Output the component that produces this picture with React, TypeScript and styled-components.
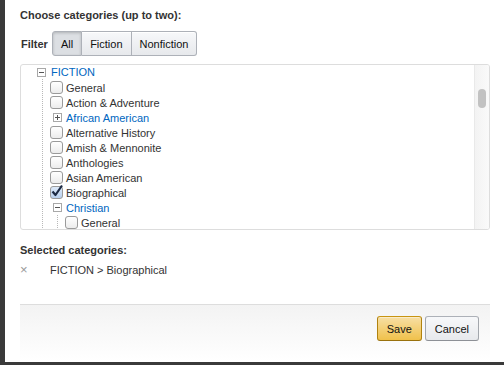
import styled, { createGlobalStyle } from "styled-components";

const GlobalStyle = createGlobalStyle`
  html, body {
    margin: 0;
    padding: 0;
    background: #3a3a3a;
    overflow: hidden;
  }
  body {
    font-family: "Liberation Sans", Arial, sans-serif;
    font-size: 11px;
    color: #333;
  }
`;

type Item =
  | { kind: "check"; label: string; checked?: boolean }
  | { kind: "group"; label: string; open: boolean; children?: Item[] };

const fictionChildren: Item[] = [
  { kind: "check", label: "General" },
  { kind: "check", label: "Action & Adventure" },
  { kind: "group", label: "African American", open: false },
  { kind: "check", label: "Alternative History" },
  { kind: "check", label: "Amish & Mennonite" },
  { kind: "check", label: "Anthologies" },
  { kind: "check", label: "Asian American" },
  { kind: "check", label: "Biographical", checked: true },
  {
    kind: "group",
    label: "Christian",
    open: true,
    children: [{ kind: "check", label: "General" }],
  },
];

const Expander = ({ open }: { open: boolean }) => (
  <ExpanderIcon width="9" height="9" viewBox="0 0 9 9">
    <rect x="0.5" y="0.5" width="8" height="8" fill="#fff" stroke="#a8a8a8" />
    <line x1="2" y1="4.5" x2="7" y2="4.5" stroke="#555" />
    {!open && <line x1="4.5" y1="2" x2="4.5" y2="7" stroke="#555" />}
  </ExpanderIcon>
);

const CheckBox = ({ checked }: { checked?: boolean }) => (
  <Box $checked={checked}>
    {checked && (
      <svg width="14" height="14" viewBox="0 0 14 14">
        <path
          d="M2.5 7.5 L5.5 11 L12 1.5"
          fill="none"
          stroke="#1c2a44"
          strokeWidth="2.2"
          strokeLinejoin="round"
        />
      </svg>
    )}
  </Box>
);

const renderItems = (items: Item[]) =>
  items.map((it, i) =>
    it.kind === "check" ? (
      <Row key={i}>
        <CheckBox checked={it.checked} />
        <Label>{it.label}</Label>
      </Row>
    ) : (
      <div key={i}>
        <Row>
          <GroupToggle>
            <Expander open={it.open} />
          </GroupToggle>
          <Link>{it.label}</Link>
        </Row>
        {it.children && <Children $nested>{renderItems(it.children)}</Children>}
      </div>
    )
  );

const App = () => {
  return (
    <Page>
      <GlobalStyle />
      <Modal>
        <Title>Choose categories (up to two):</Title>
        <FilterRow>
          <FilterLabel>Filter</FilterLabel>
          <ButtonGroup>
            <FilterButton $active>All</FilterButton>
            <FilterButton>Fiction</FilterButton>
            <FilterButton>Nonfiction</FilterButton>
          </ButtonGroup>
        </FilterRow>
        <TreeBox>
          <TreeScroll>
            <RootRow>
              <Expander open />
              <Link>FICTION</Link>
            </RootRow>
            <Children>{renderItems(fictionChildren)}</Children>
          </TreeScroll>
          <ScrollTrack>
            <ScrollThumb />
          </ScrollTrack>
        </TreeBox>
        <SectionTitle>Selected categories:</SectionTitle>
        <SelectedRow>
          <Remove>×</Remove>
          <span>FICTION &gt; Biographical</span>
        </SelectedRow>
        <Footer>
          <SaveButton>Save</SaveButton>
          <CancelButton>Cancel</CancelButton>
        </Footer>
      </Modal>
    </Page>
  );
};

const Page = styled.div`
  width: 504px;
  height: 365px;
  padding-left: 5px;
  box-sizing: border-box;
  overflow: hidden;
`;

const Modal = styled.div`
  width: 505px;
  height: 362px;
  background: #fff;
  box-sizing: border-box;
  padding: 0 20px 0 15px;
  display: flex;
  flex-direction: column;
`;

const Title = styled.div`
  margin-top: 8px;
  font-weight: bold;
  line-height: 14px;
`;

const FilterRow = styled.div`
  display: flex;
  align-items: center;
  margin-top: 9px;
  height: 25px;
`;

const FilterLabel = styled.span`
  font-weight: bold;
  margin: 0 4px 0 1px;
`;

const ButtonGroup = styled.div`
  display: flex;
`;

const FilterButton = styled.div<{ $active?: boolean }>`
  height: 25px;
  box-sizing: border-box;
  padding: 0 8px;
  display: flex;
  align-items: center;
  border: 1px solid #adb1b8;
  border-left-width: 0;
  background: ${(p) =>
    p.$active ? "#dcdfe3" : "linear-gradient(#f7f8fa, #e7e9ec)"};
  box-shadow: ${(p) =>
    p.$active ? "inset 0 1px 3px rgba(0,0,0,0.2)" : "inset 0 1px 0 #fff"};
  color: #111;

  &:first-child {
    border-left-width: 1px;
    border-radius: 3px 0 0 3px;
  }
  &:last-child {
    border-radius: 0 3px 3px 0;
  }
`;

const TreeBox = styled.div`
  margin-top: 8px;
  height: 166px;
  box-sizing: border-box;
  border: 1px solid #ddd;
  border-radius: 3px;
  display: flex;
  overflow: hidden;
`;

const TreeScroll = styled.div`
  flex: 1;
  padding: 0 0 0 16px;
  overflow: hidden;
`;

const RootRow = styled.div`
  display: flex;
  align-items: center;
  gap: 5px;
  height: 14px;
`;

const Children = styled.div<{ $nested?: boolean }>`
  margin-left: ${(p) => (p.$nested ? "7px" : "5px")};
  padding-left: 7px;
  padding-top: ${(p) => (p.$nested ? "0" : "1px")};
  border-left: 1px dotted #b8b8b8;
`;

const Row = styled.div`
  display: flex;
  align-items: center;
  height: 15px;
`;

const GroupToggle = styled.span`
  width: 12px;
  display: flex;
  justify-content: flex-end;
  margin-right: 4px;
`;

const ExpanderIcon = styled.svg`
  display: block;
  flex: none;
`;

const Box = styled.span<{ $checked?: boolean }>`
  width: 13px;
  height: 13px;
  flex: none;
  position: relative;
  border: 1px solid #9a9a9a;
  border-radius: 3px;
  background: ${(p) =>
    p.$checked
      ? "linear-gradient(#dce9f9, #b9d0ee)"
      : "linear-gradient(#fff, #ececec)"};
  margin-right: 3px;
  box-sizing: border-box;

  svg {
    position: absolute;
    left: -1px;
    top: -3px;
  }
`;

const Label = styled.span`
  color: #333;
`;

const Link = styled.span`
  color: #0066c0;
`;

const ScrollTrack = styled.div`
  width: 15px;
  flex: none;
  background: linear-gradient(90deg, #f3f3f3, #fafafa);
  border-left: 1px solid #e9e9e9;
  box-sizing: border-box;
  padding: 24px 0 0 3px;
`;

const ScrollThumb = styled.div`
  width: 8px;
  height: 19px;
  border-radius: 4px;
  background: #c2c2c2;
`;

const SectionTitle = styled.div`
  margin-top: 13px;
  font-weight: bold;
  line-height: 14px;
`;

const SelectedRow = styled.div`
  display: grid;
  grid-template-columns: 30px auto;
  margin-top: 6px;
  line-height: 14px;
`;

const Remove = styled.span`
  color: #999;
  font-size: 13px;
`;

const Footer = styled.div`
  margin-top: 27px;
  flex: 1;
  border-top: 1px solid #ddd;
  background: linear-gradient(#f3f3f3, #fff);
  display: flex;
  justify-content: flex-end;
  align-items: flex-start;
  gap: 3px;
  padding: 11px 11px 0 0;
`;

const BaseButton = styled.div`
  height: 25px;
  box-sizing: border-box;
  display: flex;
  align-items: center;
  border-radius: 3px;
  color: #111;
  font-size: 11px;
  padding: 0 9px;
  border: 1px solid;
`;

const SaveButton = styled(BaseButton)`
  border-color: #c89411 #b0820f #99710d;
  background: linear-gradient(#f7dfa5, #f0c14b);
  box-shadow: inset 0 1px 0 rgba(255, 255, 255, 0.4);
`;

const CancelButton = styled(BaseButton)`
  border-color: #adb1b8 #a2a6ac #8d9096;
  background: linear-gradient(#f7f8fa, #e7e9ec);
`;

export default App;
